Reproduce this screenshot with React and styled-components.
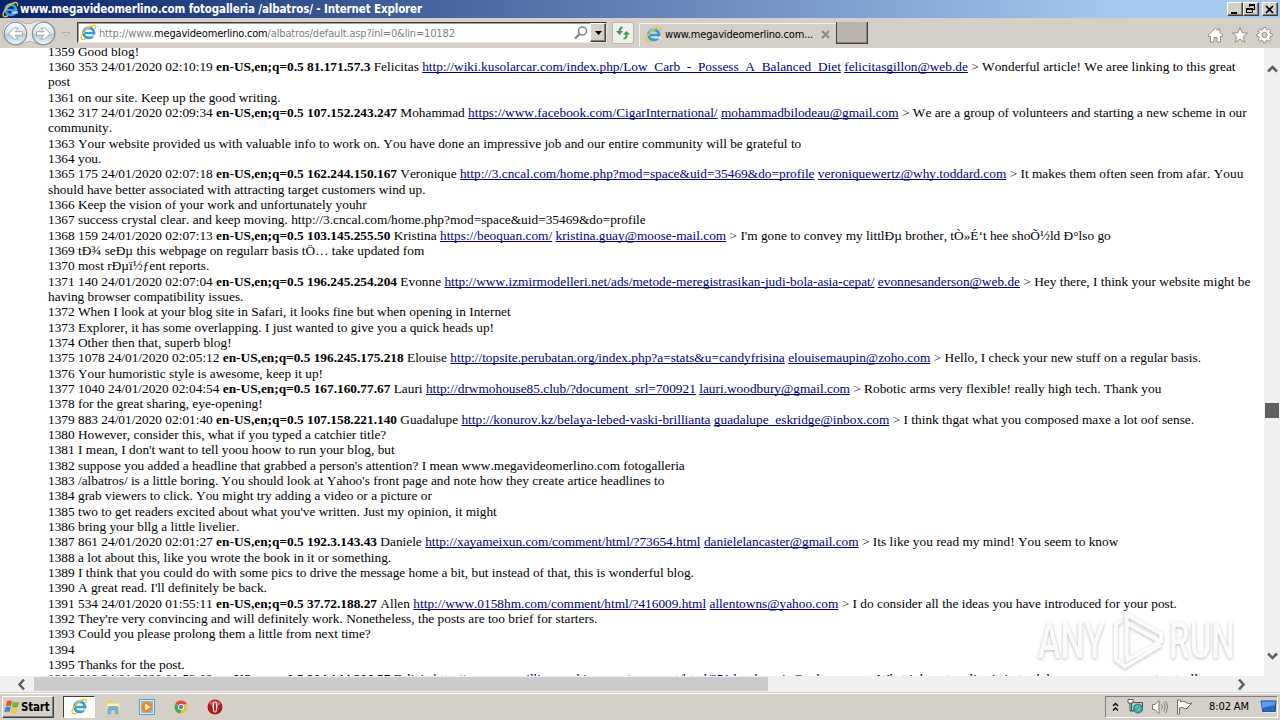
import React from 'react';
import styled, { createGlobalStyle } from "styled-components"

const GlobalStyle = createGlobalStyle`
  * { box-sizing: border-box; }
  body { margin: 0; background: #fff; overflow: hidden; }
`
const ui = `"DejaVu Sans Condensed", "DejaVu Sans", sans-serif`

const Screen = styled.div`
  width: 1280px;
  height: 720px;
  display: flex;
  flex-direction: column;
  overflow: hidden;
  font-family: ${ui};
  font-size: 11px;
  color: #000;
`
const TitleBar = styled.header`
  height: 18px;
  flex: none;
  display: flex;
  align-items: center;
  gap: 1px;
  padding: 0 2px;
  background: linear-gradient(90deg, #0a246a 0%, #a6caf0 88%);
`
const Title = styled.h1`
  flex: 1;
  margin: 0;
  color: #fff;
  font-size: 11.5px;
  font-weight: bold;
  line-height: 17px;
  white-space: nowrap;
  letter-spacing: ${props => props.$spacing}px;
`
const WinButton = styled.button`
  width: 16px;
  height: 14px;
  padding: 0;
  margin-left: ${props => props.$gap || -1}px;
  display: flex;
  align-items: center;
  justify-content: center;
  background: #d4d0c8;
  border: 1px solid;
  border-color: #fff #404040 #404040 #fff;
  box-shadow: inset -1px -1px #808080;
`
const Toolbar = styled.nav`
  height: 30px;
  flex: none;
  display: flex;
  align-items: flex-start;
  background: #d4d0c8;
  padding: 4px 7px 0 2px;
`
const NavButtons = styled.div`
  width: 75px;
  height: 26px;
  margin-top: -3px;
`
const AddressBar = styled.div`
  width: 530px;
  height: 21px;
  display: flex;
  align-items: center;
  background: #fff;
  border: 1px solid #808080;
  border-color: #404040 #e8e4dc #e8e4dc #404040;
  box-shadow: inset 1px 1px #a09c98;
  padding-left: 2px;
`
const Url = styled.div`
  flex: 1;
  margin-left: 2px;
  padding-top: 2px;
  color: #808080;
  font-size: 11px;
  white-space: nowrap;
  letter-spacing: ${props => props.$spacing}px;
  b { font-weight: normal; color: #000; }
`
const DropButton = styled.button`
  width: 16px;
  height: 19px;
  margin-left: 2px;
  padding: 0;
  background: #d4d0c8;
  border: 1px solid;
  border-color: #fff #404040 #404040 #fff;
  box-shadow: inset -1px -1px #808080;
  display: flex;
  align-items: center;
  justify-content: center;
`
const RefreshButton = styled.button`
  width: 22px;
  height: 22px;
  margin: 0 6px 0 5px;
  padding: 0;
  background: #f1efec;
  border: 1px solid #b9b5ad;
  border-radius: 2px;
  display: flex;
  align-items: center;
  justify-content: center;
`
const Tab = styled.div`
  width: 197px;
  height: 24px;
  margin-top: 1px;
  margin-left: -1px;
  display: flex;
  align-items: center;
  border-left: 1px solid #f4f2ee;
  border-top: 1px solid #f4f2ee;
  padding: 0 6px 3px 5px;
`
const TabTitle = styled.span`
  flex: 1;
  margin-left: 3px;
  white-space: nowrap;
  letter-spacing: ${props => props.$spacing}px;
`
const NewTab = styled.div`
  width: 32px;
  height: 22px;
  background: #bab3ab;
  border: 1px solid #404040;
  border-top: none;
  box-shadow: inset -1px -1px #8a857e;
`
const Tools = styled.div`
  margin-left: auto;
  margin-top: 4px;
  display: flex;
  gap: 7px;
`
const Viewport = styled.main`
  height: 628px;
  flex: none;
  display: flex;
  background: #fff;
`
const Page = styled.article`
  flex: 1;
  min-width: 0;
  height: 628px;
  overflow: hidden;
  padding-left: 48px;
  font-family: "Liberation Serif", "Times New Roman", serif;
  font-size: 13.333px;
  font-kerning: none;
`
const Lines = styled.div`
  margin-top: -4.25px;
`
const Line = styled.div`
  height: 15.33px;
  line-height: 15.33px;
  white-space: pre;
  &:last-child { margin-top: -1px; }
`
const Anchor = styled.a`
  color: #000080;
  text-decoration: underline;
  text-decoration-thickness: 1px;
  text-decoration-skip-ink: none;
`
const VScroll = styled.aside`
  width: 16px;
  background: #f0f0f0;
  display: flex;
  flex-direction: column;
  align-items: center;
  padding: 15px 0 14px;
`
const VThumb = styled.div`
  width: 14px;
  height: 15px;
  margin: 327px 0 auto;
  background: #606060;
`
const HScroll = styled.aside`
  height: 16px;
  flex: none;
  display: flex;
  align-items: center;
  background: #f0f0f0;
  padding: 0 32px 0 15px;
`
const HThumb = styled.div`
  width: 734px;
  height: 14px;
  margin: 0 auto 0 6px;
  background: #cbcbcb;
`
const Taskbar = styled.footer`
  height: 28px;
  flex: none;
  display: flex;
  align-items: center;
  background: #d4d0c8;
  border-top: 1px solid #d4d0c8;
  box-shadow: inset 0 1px #fff;
  padding: 2px 2px 2px;
`
const Start = styled.button`
  width: 52px;
  height: 22px;
  padding: 0 0 0 1px;
  display: flex;
  align-items: center;
  gap: 0;
  font-family: ${ui};
  font-size: 11.5px;
  font-weight: bold;
  letter-spacing: -0.2px;
  color: #000;
  background: #d4d0c8;
  border: 1px solid;
  border-color: #fff #404040 #404040 #fff;
  box-shadow: inset -1px -1px #808080;
`
const TaskItem = styled.div`
  width: ${props => props.$active ? 32 : 30}px;
  height: 22px;
  margin-left: ${props => props.$active ? 9 : props.$gap || 0}px;
  display: flex;
  align-items: center;
  justify-content: center;
  background: ${props => props.$active ? "#fdfdfc" : "transparent"};
  border: ${props => props.$active ? "1px solid" : "none"};
  border-color: #404040 #fff #fff #404040;
`
const Tray = styled.div`
  width: 173px;
  height: 22px;
  margin-left: auto;
  display: flex;
  align-items: center;
  gap: 7px;
  border: 1px solid;
  border-color: #808080 #fff #fff #808080;
  padding-left: 5px;
`
const Clock = styled.span`
  width: 42px;
  margin: 0 2px 0 9px;
  font-size: 11px;
  white-space: nowrap;
  letter-spacing: -0.1px;
`
// floats over the page, bottom right
const Watermark = styled.div`
  position: absolute;
  left: 1038px;
  top: 608px;
  width: 200px;
  height: 66px;
  display: flex;
  align-items: center;
  color: #fbfbfb;
  font-family: Roboto, sans-serif;
  font-size: 50px;
  font-weight: 500;
  filter: drop-shadow(0 1px 1.5px rgba(0, 0, 0, 0.28));
`
const Word = styled.span`
  width: ${props => props.$w}px;
  white-space: nowrap;
  line-height: 60px;
  transform: scaleX(${props => props.$sx});
  transform-origin: 0 50%;
`

const IeIcon = ({ size = 17 }) => (
    <svg width={size} height={size} viewBox="0 0 16 16" fill="none">
        <ellipse cx="8.200" cy="8.300" rx="4.900" ry="4.800" stroke="#2f9de0" strokeWidth="2.700" />
        <path d="M9 9.700h6v2.100H9z" fill="#fff" fillOpacity=".75" />
        <path d="M4 7.400h10.300v2.200H4z" fill="#2f9de0" />
        <path d="M3.600 5.700c1.300-2.200 3.400-3 5.700-2.700" stroke="#9bd8f7" strokeWidth=".9" />
        <path d="M14.300 4.600c.7-1.700.4-2.900-.8-3.100C11.500 1.200 8 3.200 4.900 6.400 1.900 9.500.4 12.900 1.500 14.200c.7.900 2.300.5 4.100-.5" stroke="#f6c021" strokeWidth="1.300" />
    </svg>
)

const Chevron = ({ dir }) => {
    const paths = {
        up: "M2 8.500 6.500 4 11 8.500",
        down: "M2 4.500 6.500 9 11 4.500",
        left: "M9 1.500 4.500 6.500 9 11.500",
        right: "M4 1.500 8.500 6.500 4 11.500",
    }
    return (
        <svg width="13" height="13" viewBox="0 0 13 13" fill="none">
            <path d={paths[dir]} stroke="#606060" strokeWidth="2.600" />
        </svg>
    )
}

const lang = "en-US,en;q=0.5 "

// plain string = a wrapped or unsigned line, array = [meta, ip, name, url, mail, text]
const lines = [
    "1359 Good blog!",
    ["1360 353 24/01/2020 02:10:19", "81.171.57.3", "Felicitas", "http://wiki.kusolarcar.com/index.php/Low_Carb_-_Possess_A_Balanced_Diet", "felicitasgillon@web.de", "Wonderful article! We aree linking to this great"],
    "post",
    "1361 on our site. Keep up the good writing.",
    ["1362 317 24/01/2020 02:09:34", "107.152.243.247", "Mohammad", "https://www.facebook.com/CigarInternational/", "mohammadbilodeau@gmail.com", "We are a group of volunteers and starting a new scheme in our"],
    "community.",
    "1363 Your website provided us with valuable info to work on. You have done an impressive job and our entire community will be grateful to",
    "1364 you.",
    ["1365 175 24/01/2020 02:07:18", "162.244.150.167", "Veronique", "http://3.cncal.com/home.php?mod=space&uid=35469&do=profile", "veroniquewertz@why.toddard.com", "It makes them often seen from afar. Youu"],
    "should have better associated with attracting target customers wind up.",
    "1366 Keep the vision of your work and unfortunately youhr",
    "1367 success crystal clear. and keep moving. http://3.cncal.com/home.php?mod=space&uid=35469&do=profile",
    ["1368 159 24/01/2020 02:07:13", "103.145.255.50", "Kristina", "https://beoquan.com/", "kristina.guay@moose-mail.com", "I'm gone to convey my littlÐµ brother, tÒ»É‘t hee shoÕ½ld Ð°lso go"],
    "1369 tÐ¾ seÐµ this webpage on regularr basis tÖ… take updated fom",
    "1370 most rÐµï½ƒent reports.",
    ["1371 140 24/01/2020 02:07:04", "196.245.254.204", "Evonne", "http://www.izmirmodelleri.net/ads/metode-meregistrasikan-judi-bola-asia-cepat/", "evonnesanderson@web.de", "Hey there, I think your website might be"],
    "having browser compatibility issues.",
    "1372 When I look at your blog site in Safari, it looks fine but when opening in Internet",
    "1373 Explorer, it has some overlapping. I just wanted to give you a quick heads up!",
    "1374 Other then that, superb blog!",
    ["1375 1078 24/01/2020 02:05:12", "196.245.175.218", "Elouise", "http://topsite.perubatan.org/index.php?a=stats&u=candyfrisina", "elouisemaupin@zoho.com", "Hello, I check your new stuff on a regular basis."],
    "1376 Your humoristic style is awesome, keep it up!",
    ["1377 1040 24/01/2020 02:04:54", "167.160.77.67", "Lauri", "http://drwmohouse85.club/?document_srl=700921", "lauri.woodbury@gmail.com", "Robotic arms very flexible! really high tech. Thank you"],
    "1378 for the great sharing, eye-opening!",
    ["1379 883 24/01/2020 02:01:40", "107.158.221.140", "Guadalupe", "http://konurov.kz/belaya-lebed-vaski-brillianta", "guadalupe_eskridge@inbox.com", "I think thgat what you composed maxe a lot oof sense."],
    "1380 However, consider this, what if you typed a catchier title?",
    "1381 I mean, I don't want to tell yoou hoow to run your blog, but",
    "1382 suppose you added a headline that grabbed a person's attention? I mean www.megavideomerlino.com fotogalleria",
    "1383 /albatros/ is a little boring. You should look at Yahoo's front page and note how they create artice headlines to",
    "1384 grab viewers to click. You might try adding a video or a picture or",
    "1385 two to get readers excited about what you've written. Just my opinion, it might",
    "1386 bring your bllg a little livelier.",
    ["1387 861 24/01/2020 02:01:27", "192.3.143.43", "Daniele", "http://xayameixun.com/comment/html/?73654.html", "danielelancaster@gmail.com", "Its like you read my mind! You seem to know"],
    "1388 a lot about this, like you wrote the book in it or something.",
    "1389 I think that you could do with some pics to drive the message home a bit, but instead of that, this is wonderful blog.",
    "1390 A great read. I'll definitely be back.",
    ["1391 534 24/01/2020 01:55:11", "37.72.188.27", "Allen", "http://www.0158hm.com/comment/html/?416009.html", "allentowns@yahoo.com", "I do consider all the ideas you have introduced for your post."],
    "1392 They're very convincing and will definitely work. Nonetheless, the posts are too brief for starters.",
    "1393 Could you please prolong them a little from next time?",
    "1394",
    "1395 Thanks for the post.",
    ["1396 610 24/01/2020 01:53:09", "204.144.206.57", "Felicia", "http://www.cncmillingmachine.com/comment/html/?51.html", "maria@yahoo.com", "What i do not realize is in truth how you are now not actually"],
]

const Entry = ({ data }) => {
    if (typeof data === "string") return <Line>{data}</Line>
    const [meta, ip, name, url, mail, text] = data
    return (
        <Line>
            {meta} <b>{lang}{ip}</b> {name} <Anchor>{url}</Anchor> <Anchor>{mail}</Anchor> {"> " + text}
        </Line>
    )
}

const Nav = () => (
    <svg width="75" height="28" viewBox="0 0 75 28">
        <defs>
            <linearGradient id="orb" x1="0" y1="0" x2="0" y2="1">
                <stop offset="0" stopColor="#fdfeff" />
                <stop offset=".46" stopColor="#dbe4ea" />
                <stop offset=".54" stopColor="#b9cad5" />
                <stop offset="1" stopColor="#e8f8fd" />
            </linearGradient>
        </defs>
        <path d="M6 3c4-2 12-2 16 1 3 1 6 1 9-.5 5-3 13-2 17 1 8 5 6 17-1 20-5 2-10 2-15-1-4-2-7-1-11 1-6 3-15 1-18-4C-1 14 0 7 6 3z" fill="#ebe9e5" stroke="#b5b0aa" />
        {[0, 28].map(x => (
            <g key={x} transform={`translate(${x} 0)`}>
                <circle cx="13.500" cy="14.500" r="11.200" fill="url(#orb)" stroke="#7e8d99" strokeWidth="1.100" />
                <path d={x ? "M6.500 12.700h7.500L10.800 9h3.800l5.900 5.500-5.900 5.500h-3.800l3.200-3.700H6.500z" : "M20.500 12.700h-7.500L16.200 9h-3.800L6.500 14.500l5.900 5.500h3.800L13 16.300h7.500z"} fill="#fff" stroke="#93a3af" strokeWidth=".9" />
            </g>
        ))}
        <path d="M60 13.500h8l-4 4z" fill="#dedad6" stroke="#b0aaa7" />
    </svg>
)

const App = () => (
    <Screen>
        <GlobalStyle />
        <TitleBar>
            <IeIcon />
            <Title $spacing={-0.13}>www.megavideomerlino.com fotogalleria /albatros/ - Internet Explorer</Title>
            <WinButton>
                <svg width="10" height="9"><rect x="1" y="7" width="6" height="2" /></svg>
            </WinButton>
            <WinButton>
                <svg width="10" height="10" fill="none" stroke="#000" shapeRendering="crispEdges">
                    <path d="M3.500 3V.5h5v5H7M3 1.500h6M.5 4.500h6v4h-6zM0 5.500h7" />
                </svg>
            </WinButton>
            <WinButton $gap={2}>
                <svg width="10" height="9" stroke="#000" strokeWidth="1.700"><path d="M1 1l7 7M8 1l-7 7" /></svg>
            </WinButton>
        </TitleBar>
        <Toolbar>
            <NavButtons><Nav /></NavButtons>
            <AddressBar>
                <IeIcon />
                <Url $spacing={-0.16}>http://www.<b>megavideomerlino.com</b>/albatros/default.asp?inl=0&amp;lin=10182</Url>
                <svg width="14" height="14" fill="none" stroke="#7b7b7b">
                    <circle cx="8.500" cy="5" r="4" strokeWidth="1.500" />
                    <path d="M5.500 8 1 12.500" strokeWidth="2.200" />
                </svg>
                <DropButton>
                    <svg width="7" height="4"><path d="M0 0h7L3.500 4z" /></svg>
                </DropButton>
            </AddressBar>
            <RefreshButton>
                <svg width="16" height="16" fill="none" stroke="#3f9b48" strokeWidth="2">
                    <path d="M7.500 2.500C5 2.500 4.500 4 4.500 7M8.500 13.500c3 0 3-1.500 3-4.500" />
                    <path d="M1 6h7L4.500 10zM8 9.500h7L11.500 6z" fill="#3f9b48" stroke="none" />
                </svg>
            </RefreshButton>
            <Tab>
                <IeIcon />
                <TabTitle $spacing={-0.17}>www.megavideomerlino.com...</TabTitle>
                <svg width="9" height="9" stroke="#8d8984" strokeWidth="2"><path d="M1 1l7 7M8 1l-7 7" /></svg>
            </Tab>
            <NewTab />
            <Tools>
                <svg width="17" height="18" viewBox="0 0 17 18" fill="#fff" stroke="#8e8a86">
                    <path d="M8.500 2 1.500 9v1.500h2V16h3.500v-4.500h3V16h3.500v-5.500h2V9l-2.500-2.500V3h-2v1.500z" />
                </svg>
                <svg width="18" height="18" viewBox="0 0 18 18" fill="#fff" stroke="#8e8a86">
                    <path d="m9 1.500 2.100 5.200 5.500.4-4.200 3.600 1.300 5.500L9 13.200l-4.700 3 1.300-5.500-4.200-3.600 5.500-.4z" />
                </svg>
                <svg width="17" height="18" viewBox="0 0 17 18" fill="#fff" stroke="#8e8a86">
                    <path d="M7.200 1.500h2.600l.3 2 1.200.5 1.700-1.200 1.800 1.800-1.200 1.700.5 1.200 2 .3v2.600l-2 .3-.5 1.200 1.200 1.700-1.800 1.800-1.700-1.200-1.200.5-.3 2H7.200l-.3-2-1.200-.5L4 15.400l-1.800-1.800 1.200-1.700-.5-1.200-2-.3V7.800l2-.3.5-1.200L2.200 4.600 4 2.800 5.700 4l1.200-.5z" />
                    <circle cx="8.500" cy="9" r="2.600" fill="#d4d0c8" />
                </svg>
            </Tools>
        </Toolbar>
        <Viewport>
            <Page>
                <Lines>
                    {lines.map((data, i) => <Entry key={i} data={data} />)}
                </Lines>
            </Page>
            <VScroll>
                <Chevron dir="up" />
                <VThumb />
                <Chevron dir="down" />
            </VScroll>
        </Viewport>
        <HScroll>
            <Chevron dir="left" />
            <HThumb />
            <Chevron dir="right" />
        </HScroll>
        <Taskbar>
            <Start>
                <svg width="17" height="16" viewBox="0 0 17 16">
                    <path d="M3 2.200c2-1 3.400-.8 5.200.2L7 7.200C5 6.300 3.800 6.300 1.700 7.200z" fill="#e8572b" />
                    <path d="M9.200 2.800c2 1 3.500 1 6 0L14 7.800c-2.200 1-4 .8-6 0z" fill="#6eb43b" />
                    <path d="M1.500 8.200c2-.9 3.300-.8 5.200.1l-1.200 4.800c-2-1-3.300-.9-5.300 0z" fill="#3d87d6" />
                    <path d="M7.700 8.800c2 .9 3.600 1 6 0l-1.200 5c-2.300.9-4 .8-6-.1z" fill="#f7c52c" />
                </svg>
                Start
            </Start>
            <TaskItem $active><IeIcon /></TaskItem>
            <TaskItem $gap={3}>
                <svg width="16" height="16" viewBox="0 0 16 16">
                    <path d="M1 2h6l1 2h6v8H1z" fill="#e9cf70" />
                    <path d="M2 4.500h12V9H2z" fill="#fff1b4" />
                    <path d="M1 7h14v5H1z" fill="#f5df91" />
                    <path d="M3 9c0-1 1-1.500 2-1.500h6c1 0 2 .5 2 1.500v6h-2.500v-4h-5v4H3z" fill="#70b6dd" stroke="#4f9dcb" strokeWidth=".5" />
                </svg>
            </TaskItem>
            <TaskItem $gap={4}>
                <svg width="16" height="16" viewBox="0 0 16 16">
                    <rect x=".5" y=".5" width="15" height="15" fill="#d9e9f5" stroke="#5b9ed0" />
                    <rect x="2" y="2" width="12" height="12" fill="#8dbfe4" />
                    <circle cx="8" cy="8" r="5.600" fill="#f08a1c" />
                    <path d="M6.300 4.700v6.600L11.500 8z" fill="#fff" />
                </svg>
            </TaskItem>
            <TaskItem $gap={4}>
                <svg width="14" height="14" viewBox="0 0 14 14">
                    <circle cx="7" cy="7" r="6.500" fill="#f3c43a" />
                    <path d="M7 7 1.400 3.700A6.500 6.500 0 0 0 6 13.400L9 8z" fill="#4aa757" />
                    <path d="M7 7 1.400 3.700A6.500 6.500 0 0 1 12.900 4.200H7z" fill="#de4b3c" />
                    <circle cx="7" cy="7" r="3" fill="#fff" />
                    <circle cx="7" cy="7" r="2.300" fill="#4b87d8" />
                </svg>
            </TaskItem>
            <TaskItem $gap={4}>
                <svg width="16" height="16" viewBox="0 0 16 16">
                    <circle cx="8" cy="8" r="7.500" fill="#b3161b" />
                    <path d="M2 5c2-4.500 10-4.500 12 0-4 2-8 2-12 0z" fill="#d9605c" />
                    <ellipse cx="8" cy="8" rx="2.500" ry="5.600" fill="#fff" />
                    <ellipse cx="8" cy="8" rx="1" ry="4.800" fill="#a52024" />
                </svg>
            </TaskItem>
            <Tray>
                <svg width="9" height="12" viewBox="0 0 9 12" fill="none" stroke="#000" strokeWidth="1.300">
                    <path d="M2 5l2.500-2.500L7 5M2 9.500 4.500 7 7 9.500" />
                </svg>
                <svg width="17" height="17" viewBox="0 0 17 17">
                    <path d="M4.500 4.500h11v8h-11z" fill="#b9d2d6" stroke="#4c5557" />
                    <path d="M3 5v8h4" fill="none" stroke="#4c5557" />
                    <path d="M1 1.500h5v3.500H1z" fill="#fff" stroke="#5d5d5d" />
                    <circle cx="11" cy="10.500" r="4.500" fill="#3aa9a4" stroke="#2c7d80" />
                    <path d="M8.500 10c1-2 2-1 2.500-2.500M10 13c1-2 3-1 3-3" stroke="#a7e0d0" fill="none" />
                </svg>
                <svg width="18" height="16" viewBox="0 0 18 16" fill="none" stroke="#7b7873">
                    <path d="M1.500 5.500H4l4-4v13l-4-4H1.500z" fill="#fff" />
                    <path d="M10.500 5.500c1 1.500 1 3.500 0 5M12.500 3.500c2 2.500 2 6.500 0 9M14.500 2c2.500 3.500 2.500 8.500 0 12" />
                </svg>
                <svg width="17" height="16" viewBox="0 0 17 16" fill="#fff" stroke="#6b6864">
                    <path d="M1.500 1v14h2V9c2-.8 3.500-.5 5 .5 2 .5 3.500.2 3.500-1.500l4-4c-1.500.8-3 .8-5 0-2-1.500-4-2-6.500-1.500V1z" />
                </svg>
                <Clock>8:02 AM</Clock>
                <svg width="17" height="14" viewBox="0 0 17 14">
                    <path d="M1 1h15l-1 11H3z" fill="#2468c8" stroke="#183f87" />
                    <path d="M1.500 1.500h14l-.5 4c-5 0-9 1-13 3z" fill="#5c9ce8" />
                    <path d="M3 12.500h13" stroke="#dfe8f2" />
                </svg>
            </Tray>
        </Taskbar>
        <Watermark>
            <Word $w={72} $sx={0.68}>ANY</Word>
            <svg width="59" height="66" viewBox="0 0 60 66" fill="none" stroke="#fbfbfb" strokeWidth="4">
                <path d="M17 46V6L52 26v7L18 52 17 46M17 15l33 18" />
                <path d="M12 12l-6 4v36l9 7L52 37" />
            </svg>
            <Word $w={66} $sx={0.66}>RUN</Word>
        </Watermark>
    </Screen>
)

export default App
